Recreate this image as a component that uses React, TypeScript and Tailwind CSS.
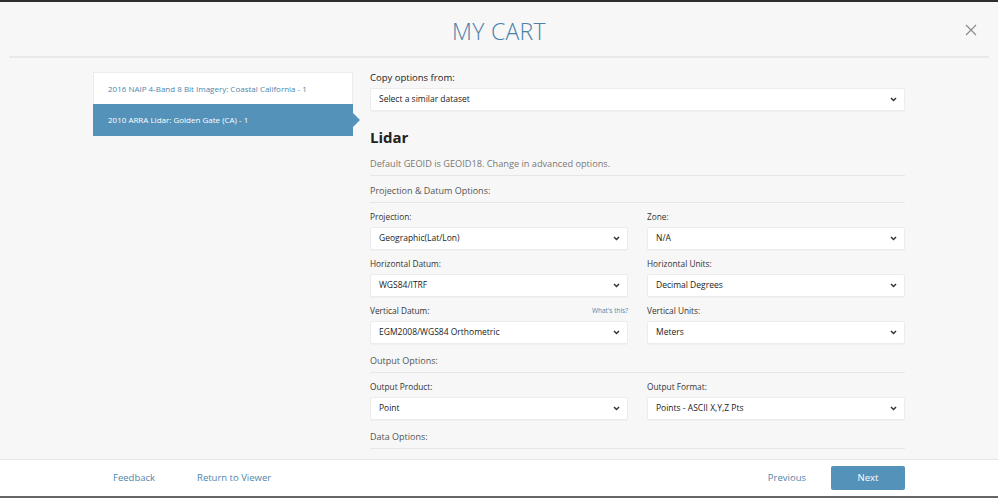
import { ReactNode } from 'react';

const font = { fontFamily: '"Open Sans", "Noto Sans", sans-serif' };

function Chevron() {
    return (
        <svg width="7" height="5" viewBox="0 0 7 5" className="shrink-0">
            <path d="M1 1 L3.5 3.5 L6 1" fill="none" stroke="#333" strokeWidth="1.5" />
        </svg>
    );
}

function SelectBox({ value }: { value: string }) {
    return (
        <div className="flex h-[23px] items-center justify-between rounded-[2px] border border-[#ececec] bg-white pl-[8px] pr-[7px] text-[8.5px] text-[#222] shadow-[0_1px_1px_rgba(0,0,0,0.03)]">
            <span>{value}</span>
            <Chevron />
        </div>
    );
}

function Field({ label, value, extra }: { label: string; value: string; extra?: ReactNode }) {
    return (
        <div className="flex flex-col">
            <div className="flex h-[16px] items-start justify-between text-[8.3px] leading-[12px] text-[#333]">
                <span>{label}</span>
                {extra}
            </div>
            <SelectBox value={value} />
        </div>
    );
}

function Section({ title, className = 'mt-[11px]' }: { title: string; className?: string }) {
    return (
        <div className={'border-b border-[#e6e6e6] pb-[5px] text-[9px] leading-[12px] text-[#555] ' + className}>
            {title}
        </div>
    );
}

export default function App() {
    return (
        <div className="flex h-[498px] w-[998px] flex-col overflow-hidden bg-[#f7f7f7]" style={font}>
            <div className="h-[2px] bg-[#2e2e2e]" />

            {/* header */}
            <div className="relative flex h-[54px] items-center justify-center">
                <h1 className="pt-[4px] text-[23px] font-light tracking-[0.3px] text-[#4a80a8]">MY CART</h1>
                <button className="absolute right-[21px] top-[22px]">
                    <svg width="12" height="12" viewBox="0 0 12 12">
                        <path d="M1 1 L11 11 M11 1 L1 11" stroke="#888" strokeWidth="1.1" />
                    </svg>
                </button>
            </div>
            <div className="mx-[9px] h-[2px] bg-[#e9e9e9]" />

            {/* body */}
            <div className="flex flex-1 gap-[17px] pl-[93px] pt-[14px]">
                <div className="w-[260px] shrink-0">
                    <div className="h-[32px] border border-b-0 border-[#ececec] bg-white pl-[14px] text-[8px] leading-[32px] text-[#4f86ad]">
                        2016 NAIP 4-Band 8 Bit Imagery: Coastal California - 1
                    </div>
                    <div className="relative h-[32px] bg-[#5592b9] pl-[15px] text-[8px] leading-[32px] text-white">
                        2010 ARRA Lidar: Golden Gate (CA) - 1
                        <span className="absolute right-[-7px] top-[9px] h-0 w-0 border-y-[7px] border-l-[7px] border-y-transparent border-l-[#5592b9]" />
                    </div>
                </div>

                <div className="w-[535px]">
                    <div className="text-[9.5px] font-medium leading-[12px] text-[#222]">Copy options from:</div>
                    <div className="mt-[4px]">
                        <SelectBox value="Select a similar dataset" />
                    </div>

                    <h2 className="mt-[16px] text-[15px] font-bold leading-[20px] text-[#222]">Lidar</h2>

                    <div className="mt-[11px] border-b border-[#e6e6e6] pb-[5px] text-[9.2px] leading-[12px] text-[#777]">
                        Default GEOID is GEOID18. Change in advanced options.
                    </div>

                    <Section title="Projection & Datum Options:" className="mt-[9px]" />

                    <div className="mt-[8px] grid grid-cols-2 gap-x-[19px] gap-y-[8px]">
                        <Field label="Projection:" value="Geographic(Lat/Lon)" />
                        <Field label="Zone:" value="N/A" />
                        <Field label="Horizontal Datum:" value="WGS84/ITRF" />
                        <Field label="Horizontal Units:" value="Decimal Degrees" />
                        <Field
                            label="Vertical Datum:"
                            value="EGM2008/WGS84 Orthometric"
                            extra={<span className="text-[6.5px] text-[#4f86ad]">What's this?</span>}
                        />
                        <Field label="Vertical Units:" value="Meters" />
                    </div>

                    <Section title="Output Options:" />

                    <div className="mt-[8px] grid grid-cols-2 gap-x-[19px]">
                        <Field label="Output Product:" value="Point" />
                        <Field label="Output Format:" value="Points - ASCII X,Y,Z Pts" />
                    </div>

                    <Section title="Data Options:" />
                </div>
            </div>

            {/* footer */}
            <div className="flex h-[37px] items-center border-t border-[#e6e6e6] bg-white text-[9.5px] text-[#4f86ad]">
                <a className="ml-[113px]">Feedback</a>
                <a className="ml-[42px]">Return to Viewer</a>
                <a className="ml-auto">Previous</a>
                <button className="ml-[25px] mr-[93px] h-[24px] w-[74px] rounded-[2px] bg-[#5592b9] text-white">Next</button>
            </div>
            <div className="h-[2px] bg-[#666]" />
        </div>
    );
}
